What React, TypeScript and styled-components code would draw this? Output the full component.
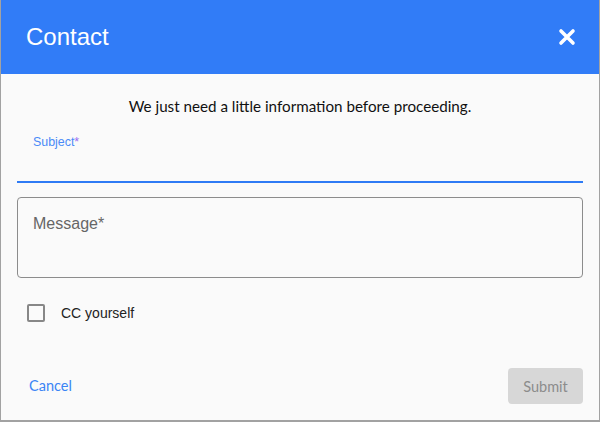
import React, { useState } from 'react';
import styled, { createGlobalStyle } from 'styled-components';

const GlobalStyle = createGlobalStyle`
  html, body {
    margin: 0;
    padding: 0;
    background: #fafafa;
  }
  * {
    box-sizing: border-box;
  }
`;

const App: React.FC = () => {
  const [cc, setCc] = useState<boolean>(false);
  return (
    <>
      <GlobalStyle />
      <Dialog>
        <Header>
          <Title>Contact</Title>
          <CloseButton aria-label="Close">
            <svg width="18" height="18" viewBox="0 0 18 18">
              <path d="M3 3 L15 15 M15 3 L3 15" stroke="#fff" strokeWidth="3.6" strokeLinecap="round" />
            </svg>
          </CloseButton>
        </Header>
        <Body>
          <Intro>We just need a little information before proceeding.</Intro>
          <UnderlineField>
            <FloatLabel>
              Subject<Star>*</Star>
            </FloatLabel>
            <LineInput />
          </UnderlineField>
          <OutlinedBox>
            <Placeholder>Message*</Placeholder>
          </OutlinedBox>
          <CheckRow onClick={() => setCc(!cc)}>
            <CheckBox checked={cc} />
            <CheckLabel>CC yourself</CheckLabel>
          </CheckRow>
          <Footer>
            <TextButton>Cancel</TextButton>
            <SubmitButton disabled>Submit</SubmitButton>
          </Footer>
        </Body>
      </Dialog>
    </>
  );
};

const Dialog = styled.div`
  width: 600px;
  height: 422px;
  background: #fafafa;
  border: 1px solid #a2a2a2;
  border-top: none;
  border-bottom-width: 2px;
  display: flex;
  flex-direction: column;
`;

const Header = styled.div`
  height: 74px;
  background-color: #317cf7;
  display: flex;
  align-items: center;
  justify-content: space-between;
  padding: 0 23px 0 25px;
`;

const Title = styled.h1`
  margin: 0;
  font-family: 'Liberation Sans', Arial, sans-serif;
  font-size: 24px;
  font-weight: 400;
  color: #fff;
`;

const CloseButton = styled.button`
  border: none;
  background: none;
  padding: 0;
  width: 18px;
  height: 18px;
  display: flex;
  cursor: pointer;
`;

const Body = styled.div`
  flex: 1;
  display: flex;
  flex-direction: column;
  padding: 0 16px;
`;

const Intro = styled.p`
  margin: 22px 0 0;
  text-align: center;
  font-family: Lato, 'Noto Sans', sans-serif;
  font-size: 15.2px;
  line-height: 20px;
  color: #111;
`;

const UnderlineField = styled.div`
  margin-top: 19px;
  display: flex;
  flex-direction: column;
  border-bottom: 2px solid #2f7bf5;
`;

const FloatLabel = styled.label`
  padding-left: 16px;
  font-family: 'Liberation Sans', Arial, sans-serif;
  font-size: 12.4px;
  line-height: 14px;
  color: #4a8af7;
`;

const Star = styled.span`
  color: #9a6ef2;
`;

const LineInput = styled.input`
  height: 32px;
  border: none;
  outline: none;
  background: transparent;
  padding: 0 16px;
  font-family: 'Liberation Sans', Arial, sans-serif;
  font-size: 16px;
`;

const OutlinedBox = styled.div`
  margin-top: 14px;
  height: 81px;
  border: 1px solid #8c8c8c;
  border-radius: 4px;
  padding: 16px 15px;
`;

const Placeholder = styled.span`
  font-family: 'Liberation Sans', Arial, sans-serif;
  font-size: 16px;
  line-height: 20px;
  color: #666;
`;

const CheckRow = styled.div`
  margin-top: 26px;
  padding-left: 10px;
  display: flex;
  align-items: center;
  gap: 16px;
  cursor: pointer;
`;

const CheckBox = styled.span<{ checked: boolean }>`
  width: 18px;
  height: 18px;
  border: 2px solid #878787;
  border-radius: 2px;
  background: ${({ checked }) => (checked ? '#317cf7' : 'transparent')};
`;

const CheckLabel = styled.span`
  font-family: 'Liberation Sans', Arial, sans-serif;
  font-size: 14px;
  color: #222;
`;

const Footer = styled.div`
  margin-top: 46px;
  display: flex;
  align-items: center;
  justify-content: space-between;
`;

const TextButton = styled.button`
  border: none;
  background: none;
  padding: 0 12px;
  margin-top: -2px;
  font-family: Lato, 'Noto Sans', sans-serif;
  font-size: 14.5px;
  color: #3b84f5;
  cursor: pointer;
`;

const SubmitButton = styled.button`
  width: 75px;
  height: 36px;
  border: none;
  border-radius: 4px;
  background: #d7d7d7;
  font-family: Lato, 'Noto Sans', sans-serif;
  font-size: 14.5px;
  color: #8c8c8c;
`;

export default App;
